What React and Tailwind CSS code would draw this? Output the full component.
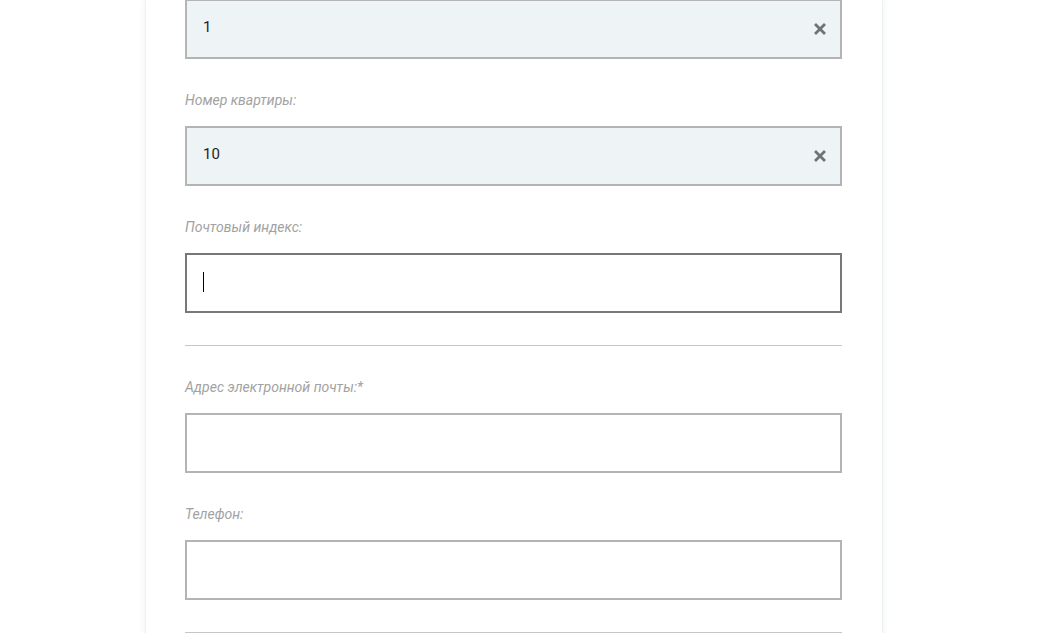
import React from "react";

// Small bold cross used to clear a filled field
const ClearIcon = () => (
  <svg width="12" height="12" viewBox="0 0 12 12" className="shrink-0">
    <path d="M2 2 L10 10 M10 2 L2 10" stroke="#6d7378" strokeWidth="2.8" strokeLinecap="square" />
  </svg>
);

const Field = ({ label, value, filled, focused, first }) => (
  <div className={first ? "" : "mt-[31px]"}>
    {label && (
      <div className="h-[20px] mb-[16px] text-[14px] leading-[20px] italic text-[#a2a2a2]">
        {label}
      </div>
    )}
    <div
      className={
        "h-[60px] border-2 flex items-center pl-[16px] pr-[14px] " +
        (focused
          ? "border-[#787878] bg-white"
          : filled
          ? "border-[#b4b4b4] bg-[#eef3f6]"
          : "border-[#b4b4b4] bg-white")
      }
    >
      <span className="flex-1 text-[15px] text-[#1e1e1e] -mt-[3px]">
        {focused ? <span className="inline-block w-px h-[20px] bg-black align-middle" /> : value}
      </span>
      {filled && <ClearIcon />}
    </div>
  </div>
);

const Divider = () => <div className="mt-[32px] h-px bg-[#c6c6c6]" />;

export default function App() {
  return (
    <div className="min-h-screen bg-white overflow-hidden" style={{ fontFamily: "Roboto, 'Noto Sans', sans-serif" }}>
      <div className="ml-[145px] w-[738px] min-h-[700px] bg-white border-x border-[#eef2f4] shadow-[0_0_6px_rgba(200,215,220,0.35)] pl-[39px] pr-[40px] -mt-px">
        <Field value="1" filled first />
        <Field label="Номер квартиры:" value="10" filled />
        <Field label="Почтовый индекс:" focused />
        <Divider />
        <Field label="Адрес электронной почты:*" />
        <Field label="Телефон:" />
        <Divider />
      </div>
    </div>
  );
}
